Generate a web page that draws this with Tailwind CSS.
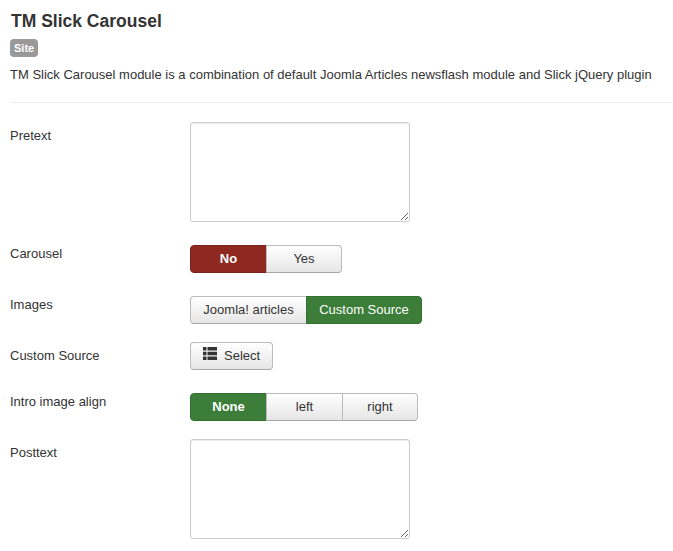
<!DOCTYPE html>
<html lang="en">
<head>
  <meta charset="UTF-8" />
  <script src="https://cdn.jsdelivr.net/npm/@tailwindcss/browser@4"></script>
  <title>TM Slick Carousel</title>
</head>
<body class="bg-white font-['Liberation_Sans',Arial,sans-serif] text-[13px] leading-[18px] text-[#333]">
  <div class="w-[673px] h-[551px] overflow-hidden pl-[10px] pt-[11px]">
    <h2 class="text-[17.5px] leading-[20px] font-bold text-[#333] pl-[1px]">TM Slick Carousel</h2>
    <div class="mt-[8px] h-[18px] flex">
      <span class="bg-[#999] text-white text-[11px] font-bold leading-[18px] px-[4px] rounded-[4px]">Site</span>
    </div>
    <p class="mt-[9px] h-[18px]">TM Slick Carousel module is a combination of default Joomla Articles newsflash module and Slick jQuery plugin</p>
    <hr class="mt-[18px] w-[662px] border-0 border-t border-[#eee]" />

    <!-- Pretext -->
    <div class="flex mt-[19px]">
      <label class="w-[180px] pt-[5px]">Pretext</label>
      <textarea class="block w-[220px] h-[100px] bg-white border border-[#ccc] rounded-[3px] shadow-[inset_0_1px_1px_rgba(0,0,0,0.075)]"></textarea>
    </div>

    <!-- Carousel -->
    <div class="flex mt-[23px]">
      <label class="w-[180px]">Carousel</label>
      <div class="flex h-[28px] text-center">
        <span class="w-[77px] leading-[26px] font-bold text-white bg-[#8f2821] border border-[#7a221c] rounded-l-[4px]">No</span>
        <span class="w-[76px] -ml-px leading-[26px] bg-linear-to-b from-white to-[#e6e6e6] border border-[#bbb] border-b-[#a8a8a8] rounded-r-[4px]">Yes</span>
      </div>
    </div>

    <!-- Images -->
    <div class="flex mt-[23px]">
      <label class="w-[180px]">Images</label>
      <div class="flex h-[28px] text-center">
        <span class="w-[117px] leading-[26px] bg-linear-to-b from-white to-[#e6e6e6] border border-[#bbb] border-b-[#a8a8a8] rounded-l-[4px]">Joomla! articles</span>
        <span class="w-[116px] -ml-px leading-[26px] text-white bg-[#3b7d39] border border-[#346f32] rounded-r-[4px]">Custom Source</span>
      </div>
    </div>

    <!-- Custom Source -->
    <div class="flex mt-[18px]">
      <label class="w-[180px] pt-[5px]">Custom Source</label>
      <span class="flex items-center gap-[7px] w-[83px] h-[28px] pl-[12px] bg-linear-to-b from-white to-[#e6e6e6] border border-[#bbb] border-b-[#a8a8a8] rounded-[4px]">
        <svg width="14" height="13" viewBox="0 0 14 13" class="text-[#333] -mt-[5px]" fill="currentColor">
          <path d="M0 0h3.500v3.500H0zM4.500 0H14v3.500H4.500zM0 4.750h3.500v3.500H0zM4.500 4.750H14v3.500H4.500zM0 9.500h3.500V13H0zM4.500 9.500H14V13H4.500z" />
        </svg>
        <span class="-mt-px">Select</span>
      </span>
    </div>

    <!-- Intro image align -->
    <div class="flex mt-[23px]">
      <label class="w-[180px]">Intro image align</label>
      <div class="flex h-[28px] text-center">
        <span class="w-[77px] leading-[26px] font-bold text-white bg-[#3b7d39] border border-[#346f32] rounded-l-[4px]">None</span>
        <span class="w-[77px] -ml-px leading-[26px] bg-linear-to-b from-white to-[#e6e6e6] border border-[#bbb] border-b-[#a8a8a8]">left</span>
        <span class="w-[76px] -ml-px leading-[26px] bg-linear-to-b from-white to-[#e6e6e6] border border-[#bbb] border-b-[#a8a8a8] rounded-r-[4px]">right</span>
      </div>
    </div>

    <!-- Posttext -->
    <div class="flex mt-[18px]">
      <label class="w-[180px] pt-[5px]">Posttext</label>
      <textarea class="block w-[220px] h-[100px] bg-white border border-[#ccc] rounded-[3px] shadow-[inset_0_1px_1px_rgba(0,0,0,0.075)]"></textarea>
    </div>
  </div>
</body>
</html>
